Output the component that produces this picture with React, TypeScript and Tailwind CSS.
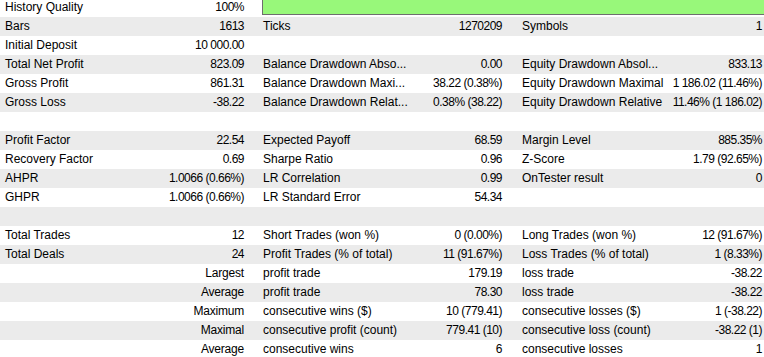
import React from "react";

type Cell = [string, string] | null;
type Row = { a: Cell; b?: Cell; c?: Cell; bar?: boolean };

const rows: Row[] = [
  { a: ["History Quality", "100%"], bar: true },
  { a: ["Bars", "1613"], b: ["Ticks", "1270209"], c: ["Symbols", "1"] },
  { a: ["Initial Deposit", "10 000.00"] },
  { a: ["Total Net Profit", "823.09"], b: ["Balance Drawdown Abso...", "0.00"], c: ["Equity Drawdown Absol...", "833.13"] },
  { a: ["Gross Profit", "861.31"], b: ["Balance Drawdown Maxi...", "38.22 (0.38%)"], c: ["Equity Drawdown Maximal", "1 186.02 (11.46%)"] },
  { a: ["Gross Loss", "-38.22"], b: ["Balance Drawdown Relat...", "0.38% (38.22)"], c: ["Equity Drawdown Relative", "11.46% (1 186.02)"] },
  { a: null },
  { a: ["Profit Factor", "22.54"], b: ["Expected Payoff", "68.59"], c: ["Margin Level", "885.35%"] },
  { a: ["Recovery Factor", "0.69"], b: ["Sharpe Ratio", "0.96"], c: ["Z-Score", "1.79 (92.65%)"] },
  { a: ["AHPR", "1.0066 (0.66%)"], b: ["LR Correlation", "0.99"], c: ["OnTester result", "0"] },
  { a: ["GHPR", "1.0066 (0.66%)"], b: ["LR Standard Error", "54.34"] },
  { a: null },
  { a: ["Total Trades", "12"], b: ["Short Trades (won %)", "0 (0.00%)"], c: ["Long Trades (won %)", "12 (91.67%)"] },
  { a: ["Total Deals", "24"], b: ["Profit Trades (% of total)", "11 (91.67%)"], c: ["Loss Trades (% of total)", "1 (8.33%)"] },
  { a: ["", "Largest"], b: ["profit trade", "179.19"], c: ["loss trade", "-38.22"] },
  { a: ["", "Average"], b: ["profit trade", "78.30"], c: ["loss trade", "-38.22"] },
  { a: ["", "Maximum"], b: ["consecutive wins ($)", "10 (779.41)"], c: ["consecutive losses ($)", "1 (-38.22)"] },
  { a: ["", "Maximal"], b: ["consecutive profit (count)", "779.41 (10)"], c: ["consecutive loss (count)", "-38.22 (1)"] },
  { a: ["", "Average"], b: ["consecutive wins", "6"], c: ["consecutive losses", "1"] },
];

function Group({ cell, w, pl, pr }: { cell?: Cell; w: string; pl: string; pr: string }) {
  const isWord = cell ? /^[A-Za-z]+$/.test(cell[1]) : false;
  return (
    <div className={`flex ${w} shrink-0 items-center`}>
      <div className={`flex-1 whitespace-nowrap overflow-hidden ${pl}`}>{cell ? cell[0] : ""}</div>
      <div
        className={`shrink-0 whitespace-nowrap text-right ${pr} ${
          isWord ? "tracking-[-0.2px]" : "tracking-[-0.5px]"
        }`}
      >
        {cell ? cell[1] : ""}
      </div>
    </div>
  );
}

export default function App() {
  return (
    <div
      className="w-[764px] h-[357px] overflow-hidden bg-white text-[12px] text-[#000000]"
      style={{ fontFamily: '"Liberation Sans", Arial, sans-serif' }}
    >
      <div className="-mt-[2px] flex flex-col">
        {rows.map((r, i) => (
          <div
            key={i}
            className={`flex h-[19px] leading-[19px] ${i % 2 === 1 ? "bg-[#ebebeb]" : "bg-white"}`}
          >
            <Group cell={r.a} w="w-[260px]" pl="pl-[5px]" pr="pr-[16px]" />
            {r.bar ? (
              <div className="flex-1 overflow-hidden pl-[2px] pt-[1px]">
                <div className="h-[16px] w-[520px] border border-[#6e6e6e] bg-[#98f87a]" />
              </div>
            ) : (
              <>
                <Group cell={r.b} w="w-[259px]" pl="pl-[3px]" pr="pr-[17px]" />
                <Group cell={r.c} w="w-[245px]" pl="pl-[3px]" pr="pr-[2px]" />
              </>
            )}
          </div>
        ))}
      </div>
    </div>
  );
}
